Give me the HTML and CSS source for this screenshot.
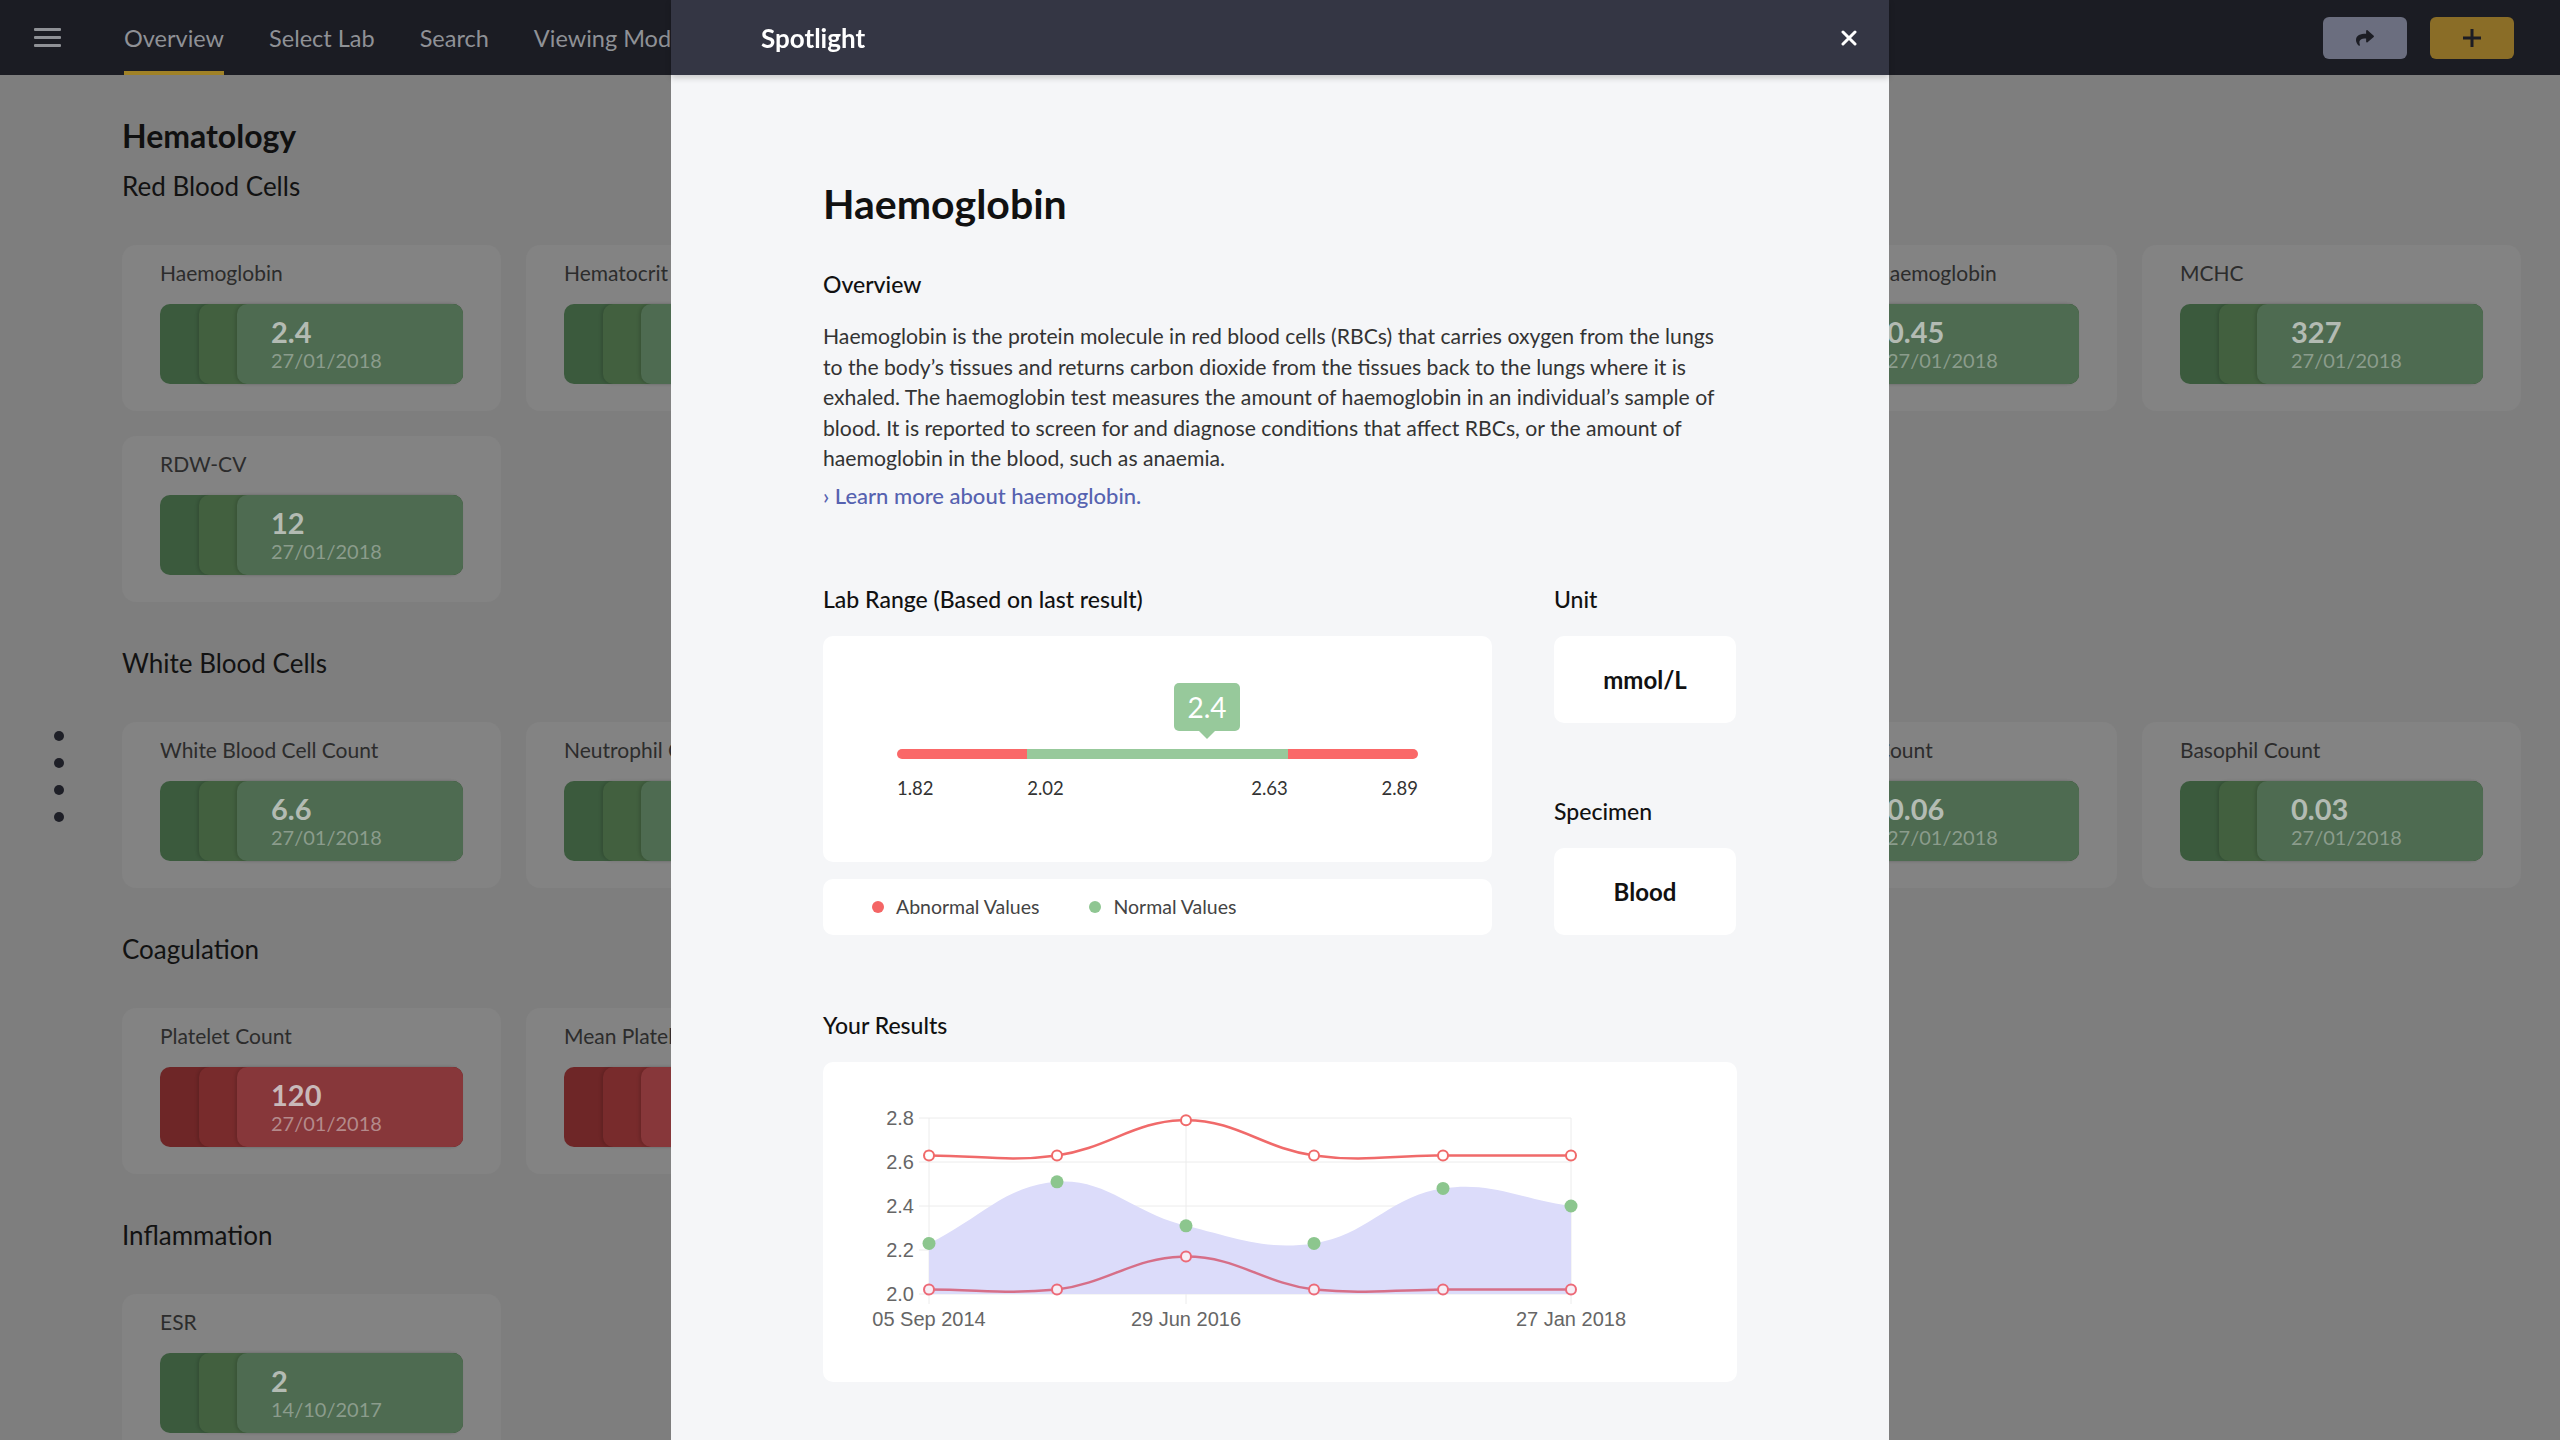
FILE: index.html
```html
<!DOCTYPE html>
<html lang="en">
<head>
<meta charset="utf-8">
<title>Lab Results – Spotlight</title>
<link rel="stylesheet" href="styles.css">
</head>
<body>
<header class="topbar">
  <button class="menu-btn" aria-label="Menu">
    <svg width="27" height="19" viewBox="0 0 27 19"><rect x="0" y="0" width="27" height="3" rx="1"/><rect x="0" y="8" width="27" height="3" rx="1"/><rect x="0" y="16" width="27" height="3" rx="1"/></svg>
  </button>
  <nav class="tabs">
    <a class="tab active" href="#">Overview</a>
    <a class="tab" href="#">Select Lab</a>
    <a class="tab" href="#">Search</a>
    <a class="tab" href="#">Viewing Mode</a>
  </nav>
  <div class="actions">
    <button class="btn btn-share" aria-label="Share">
      <svg width="20" height="18" viewBox="0 0 512 512"><path d="M503.7 189.8L327.7 37.9C312.3 24.5 288 35.3 288 56v80.1C127.4 137.9 0 170.1 0 322.3c0 61.4 39.6 122.3 83.3 154.1 13.7 9.9 33.1-2.5 28.1-18.6C66.1 312.8 132.9 274.3 288 272.1V360c0 20.7 24.3 31.5 39.7 18.2l176-152c11.1-9.6 11.1-26.8 0-36.4z"/></svg>
    </button>
    <button class="btn btn-add" aria-label="Add">
      <svg width="18" height="18" viewBox="0 0 18 18"><path d="M9 1v16M1 9h16" stroke-width="3" stroke-linecap="square"/></svg>
    </button>
  </div>
</header>

<div class="layout">
  <aside class="rail">
    <span class="dot"></span><span class="dot"></span><span class="dot"></span><span class="dot"></span>
  </aside>
  <main class="content">
    <h1 class="page-title">Hematology</h1>

    <section class="group">
      <h2 class="group-title">Red Blood Cells</h2>
      <div class="grid">
        <div class="card"><div class="card-label">Haemoglobin</div><div class="tile"><div class="tile-mid"><div class="tile-main"><div class="val">2.4</div><div class="date">27/01/2018</div></div></div></div></div>
        <div class="card"><div class="card-label">Hematocrit</div><div class="tile"><div class="tile-mid"><div class="tile-main"><div class="val">0.41</div><div class="date">27/01/2018</div></div></div></div></div>
        <div class="card hidden-card"><div class="card-label">Red Blood Cell Count</div><div class="tile"><div class="tile-mid"><div class="tile-main"><div class="val">4.6</div><div class="date">27/01/2018</div></div></div></div></div>
        <div class="card hidden-card"><div class="card-label">Mean Cell Volume</div><div class="tile"><div class="tile-mid"><div class="tile-main"><div class="val">88</div><div class="date">27/01/2018</div></div></div></div></div>
        <div class="card"><div class="card-label">Mean Cell Haemoglobin</div><div class="tile"><div class="tile-mid"><div class="tile-main"><div class="val">0.45</div><div class="date">27/01/2018</div></div></div></div></div>
        <div class="card"><div class="card-label">MCHC</div><div class="tile"><div class="tile-mid"><div class="tile-main"><div class="val">327</div><div class="date">27/01/2018</div></div></div></div></div>
        <div class="card"><div class="card-label">RDW-CV</div><div class="tile"><div class="tile-mid"><div class="tile-main"><div class="val">12</div><div class="date">27/01/2018</div></div></div></div></div>
      </div>
    </section>

    <section class="group">
      <h2 class="group-title">White Blood Cells</h2>
      <div class="grid">
        <div class="card"><div class="card-label">White Blood Cell Count</div><div class="tile"><div class="tile-mid"><div class="tile-main"><div class="val">6.6</div><div class="date">27/01/2018</div></div></div></div></div>
        <div class="card"><div class="card-label">Neutrophil Count</div><div class="tile"><div class="tile-mid"><div class="tile-main"><div class="val">3.9</div><div class="date">27/01/2018</div></div></div></div></div>
        <div class="card hidden-card"><div class="card-label">Lymphocyte Count</div><div class="tile"><div class="tile-mid"><div class="tile-main"><div class="val">2.1</div><div class="date">27/01/2018</div></div></div></div></div>
        <div class="card hidden-card"><div class="card-label">Monocyte Count</div><div class="tile"><div class="tile-mid"><div class="tile-main"><div class="val">0.5</div><div class="date">27/01/2018</div></div></div></div></div>
        <div class="card"><div class="card-label">Eosinophil Count</div><div class="tile"><div class="tile-mid"><div class="tile-main"><div class="val">0.06</div><div class="date">27/01/2018</div></div></div></div></div>
        <div class="card"><div class="card-label">Basophil Count</div><div class="tile"><div class="tile-mid"><div class="tile-main"><div class="val">0.03</div><div class="date">27/01/2018</div></div></div></div></div>
      </div>
    </section>

    <section class="group">
      <h2 class="group-title">Coagulation</h2>
      <div class="grid">
        <div class="card"><div class="card-label">Platelet Count</div><div class="tile bad"><div class="tile-mid"><div class="tile-main"><div class="val">120</div><div class="date">27/01/2018</div></div></div></div></div>
        <div class="card"><div class="card-label">Mean Platelet Volume</div><div class="tile bad"><div class="tile-mid"><div class="tile-main"><div class="val">13.2</div><div class="date">27/01/2018</div></div></div></div></div>
      </div>
    </section>

    <section class="group">
      <h2 class="group-title">Inflammation</h2>
      <div class="grid">
        <div class="card"><div class="card-label">ESR</div><div class="tile"><div class="tile-mid"><div class="tile-main"><div class="val">2</div><div class="date">14/10/2017</div></div></div></div></div>
      </div>
    </section>
  </main>
</div>

<div class="modal" role="dialog" aria-label="Spotlight">
  <div class="modal-head">
    <span class="modal-name">Spotlight</span>
    <button class="close" aria-label="Close">
      <svg width="16" height="16" viewBox="0 0 16 16"><path d="M2 2l12 12M14 2L2 14" stroke-width="3" stroke-linecap="round"/></svg>
    </button>
  </div>
  <div class="modal-body">
    <h1 class="test-title">Haemoglobin</h1>
    <h3 class="sub">Overview</h3>
    <p class="desc">Haemoglobin is the protein molecule in red blood cells (RBCs) that carries oxygen from the lungs to the body’s tissues and returns carbon dioxide from the tissues back to the lungs where it is exhaled. The haemoglobin test measures the amount of haemoglobin in an individual’s sample of blood. It is reported to screen for and diagnose conditions that affect RBCs, or the amount of haemoglobin in the blood, such as anaemia.</p>
    <a class="more" href="#">› Learn more about haemoglobin.</a>

    <div class="facts">
      <div class="range-col">
        <div class="label">Lab Range (Based on last result)</div>
        <div class="range-box">
          <div class="track">
            <div class="seg low"></div>
            <div class="seg mid"></div>
            <div class="seg high"></div>
            <div class="tip" style="left: 59.5%">2.4</div>
          </div>
          <div class="scale">
            <span class="tick">1.82</span>
            <span class="tick">2.02</span>
            <span class="tick tick-end">2.63</span>
            <span class="tick tick-end">2.89</span>
          </div>
        </div>
        <div class="legend">
          <span class="legend-item"><i class="ldot red"></i>Abnormal Values</span>
          <span class="legend-item"><i class="ldot green"></i>Normal Values</span>
        </div>
      </div>
      <div class="side-col">
        <div class="label">Unit</div>
        <div class="info-box">mmol/L</div>
        <div class="label spaced">Specimen</div>
        <div class="info-box">Blood</div>
      </div>
    </div>

    <div class="label results-label">Your Results</div>
    <div class="chart-box">
      <svg class="chart" width="913" height="320" viewBox="0 0 913 320">
        <g class="gridlines">
          <line x1="96" y1="56" x2="748" y2="56"/>
          <line x1="96" y1="100" x2="748" y2="100"/>
          <line x1="96" y1="144" x2="748" y2="144"/>
          <line x1="96" y1="188" x2="748" y2="188"/>
          <line x1="96" y1="232" x2="748" y2="232"/>
          <line x1="106" y1="56" x2="106" y2="242"/>
          <line x1="363" y1="56" x2="363" y2="242"/>
          <line x1="748" y1="56" x2="748" y2="242"/>
        </g>
        <path class="area" d="M106,232 L106,181.4 C157.2,156.8 181.5,123.4 234,119.8 C284.3,116.4 310.2,151.2 363,163.8 C413,175.8 441.7,188.6 491,181.4 C544.5,173.6 566.5,134.2 620,126.4 C669.3,119.2 696.8,137 748,144 L748,232 Z"/>
        <path class="line-hi" d="M106,93.4 C157.2,93.4 182.6,100.4 234,93.4 C285.4,86.4 311.6,58.2 363,58.2 C414.4,58.2 439.6,86.4 491,93.4 C542.4,100.4 568.6,93.4 620,93.4 C671.4,93.4 696.8,93.4 748,93.4"/>
        <path class="line-lo" d="M106,227.6 C157.2,227.6 182.6,232.5 234,227.6 C285.4,221 311.6,194.6 363,194.6 C414.4,194.6 439.6,221 491,227.6 C542.4,232.5 568.6,227.6 620,227.6 C671.4,227.6 696.8,227.6 748,227.6"/>
        <g class="pt-hi">
          <circle cx="106" cy="93.4" r="5"/><circle cx="234" cy="93.4" r="5"/><circle cx="363" cy="58.2" r="5"/><circle cx="491" cy="93.4" r="5"/><circle cx="620" cy="93.4" r="5"/><circle cx="748" cy="93.4" r="5"/>
        </g>
        <g class="pt-lo">
          <circle cx="106" cy="227.6" r="5"/><circle cx="234" cy="227.6" r="5"/><circle cx="363" cy="194.6" r="5"/><circle cx="491" cy="227.6" r="5"/><circle cx="620" cy="227.6" r="5"/><circle cx="748" cy="227.6" r="5"/>
        </g>
        <g class="pt-val">
          <circle cx="106" cy="181.4" r="6.5"/><circle cx="234" cy="119.8" r="6.5"/><circle cx="363" cy="163.8" r="6.5"/><circle cx="491" cy="181.4" r="6.5"/><circle cx="620" cy="126.4" r="6.5"/><circle cx="748" cy="144" r="6.5"/>
        </g>
        <g class="ylab">
          <text x="91" y="63">2.8</text>
          <text x="91" y="107">2.6</text>
          <text x="91" y="151">2.4</text>
          <text x="91" y="195">2.2</text>
          <text x="91" y="239">2.0</text>
        </g>
        <g class="xlab">
          <text x="106" y="264">05 Sep 2014</text>
          <text x="363" y="264">29 Jun 2016</text>
          <text x="748" y="264">27 Jan 2018</text>
        </g>
      </svg>
    </div>
  </div>
</div>
</body>
</html>
```

FILE: styles.css
```css
* { box-sizing: border-box; }

html, body {
  margin: 0;
  height: 100%;
  overflow: hidden;
}

body {
  font-family: Lato, "Noto Sans", sans-serif;
  background: #7e7e7e;
  color: #111;
}

/* ---------- top bar (dimmed behind the dialog) ---------- */
.topbar {
  height: 75px;
  background: #1b1c23;
  display: flex;
  align-items: stretch;
  padding: 0 46px 0 34px;
}

.menu-btn {
  background: none;
  border: 0;
  padding: 0;
  width: 27px;
  display: flex;
  align-items: center;
}
.menu-btn svg { fill: #8f9196; }

.tabs {
  display: flex;
  gap: 45px;
  margin-left: 63px;
}

.tab {
  display: flex;
  align-items: center;
  padding-top: 4px;
  border-bottom: 4px solid transparent;
  font-size: 23.5px;
  color: #8f9196;
  text-decoration: none;
}
.tab.active { border-bottom-color: #a08227; }

.actions {
  margin-left: auto;
  display: flex;
  align-items: center;
  gap: 23px;
}

.btn {
  width: 84px;
  height: 42px;
  border: 0;
  border-radius: 6px;
  display: flex;
  align-items: center;
  justify-content: center;
  padding: 0;
}
.btn-share { background: #6b6e7f; }
.btn-share svg { fill: #1c1d24; }
.btn-add { background: #8a6d27; }
.btn-add svg { stroke: #1c1d24; fill: none; }

/* ---------- page ---------- */
.layout { display: flex; }

.rail {
  width: 122px;
  flex: none;
  display: flex;
  flex-direction: column;
  align-items: center;
  gap: 17px;
  padding: 656px 4px 0 0;
}
.dot {
  width: 10px;
  height: 10px;
  border-radius: 50%;
  background: #1e1f27;
}

.content {
  flex: 1;
  padding: 43px 39px 0 0;
}

.page-title {
  margin: 0 0 17px;
  font-size: 32px;
  line-height: 36px;
  font-weight: 700;
  color: #101010;
}

.group + .group { margin-top: 46px; }

.group-title {
  margin: 0 0 44px;
  font-size: 26px;
  line-height: 30px;
  font-weight: 400;
  color: #121212;
}

.grid {
  display: grid;
  grid-template-columns: repeat(6, 379px);
  gap: 25px;
}

.card {
  background: #838383;
  border-radius: 14px;
  padding: 16px 38px 27px;
}
.hidden-card { visibility: hidden; }

.card-label {
  font-size: 21px;
  line-height: 24px;
  color: #2c2c2c;
  white-space: nowrap;
}

.tile {
  margin-top: 19px;
  height: 80px;
  border-radius: 10px;
  background: #3b5a3d;
  padding-left: 39px;
  display: flex;
}
.tile-mid {
  flex: 1;
  display: flex;
  border-radius: 10px;
  background: #42603f;
  padding-left: 38px;
  box-shadow: -2px 0 3px rgba(0, 0, 0, 0.12);
}
.tile-main {
  flex: 1;
  border-radius: 10px;
  background: #4e6b51;
  padding: 12px 34px 0;
  box-shadow: -2px 0 3px rgba(0, 0, 0, 0.12);
}
.val {
  font-size: 29px;
  line-height: 32px;
  font-weight: 700;
  color: #b3bbb3;
}
.date {
  font-size: 20px;
  line-height: 24px;
  color: #8b9c8c;
}

.tile.bad { background: #6e2627; }
.tile.bad .tile-mid { background: #782b2c; }
.tile.bad .tile-main { background: #87373a; }
.tile.bad .val { color: #c8b9b9; }
.tile.bad .date { color: #b48a8b; }

/* ---------- spotlight dialog ---------- */
.modal {
  position: fixed;
  top: 0;
  left: 50%;
  transform: translateX(-50%);
  width: 1218px;
  height: 100%;
  background: #f5f6f8;
  display: flex;
  flex-direction: column;
  z-index: 10;
}

.modal-head {
  height: 75px;
  flex: none;
  background: #343644;
  display: flex;
  align-items: center;
  justify-content: space-between;
  padding: 0 32px 0 90px;
  box-shadow: 0 3px 6px rgba(0, 0, 0, 0.18);
  position: relative;
}

.modal-name {
  color: #fff;
  font-size: 26px;
  font-weight: 700;
}

.close {
  background: none;
  border: 0;
  padding: 0;
  width: 16px;
  height: 16px;
  display: flex;
}
.close svg { stroke: #fff; fill: none; }

.modal-body {
  padding: 106px 152px 0;
}

.test-title {
  margin: 0;
  font-size: 41px;
  line-height: 46px;
  font-weight: 700;
  color: #111;
}

.sub {
  margin: 42px 0 0;
  font-size: 23px;
  line-height: 30px;
  font-weight: 500;
  color: #111;
}

.desc {
  margin: 22px 0 0;
  max-width: 905px;
  font-size: 21.2px;
  line-height: 30.5px;
  color: #333;
}

.more {
  display: block;
  margin-top: 7px;
  font-size: 22px;
  line-height: 30px;
  font-weight: 500;
  color: #5662b0;
  text-decoration: none;
}

.label {
  font-size: 23px;
  line-height: 30px;
  font-weight: 500;
  color: #111;
  margin-bottom: 22px;
}

.facts {
  margin-top: 73px;
  display: flex;
  gap: 62px;
}

.range-col { width: 669px; }
.side-col { width: 182px; }

.range-box {
  height: 226px;
  background: #fff;
  border-radius: 10px;
  padding: 113px 74px 0;
}

.track {
  position: relative;
  height: 10px;
  display: flex;
}
.seg { height: 10px; }
.seg.low { flex: 1; background: #fa6868; border-radius: 5px 0 0 5px; }
.seg.mid { flex: 2; background: #97c99b; }
.seg.high { flex: 1; background: #fa6868; border-radius: 0 5px 5px 0; }

.tip {
  position: absolute;
  bottom: 28px;
  transform: translateX(-50%);
  width: 66px;
  height: 48px;
  border-radius: 5px;
  background: #97c99b;
  color: #fff;
  font-size: 28px;
  display: flex;
  align-items: center;
  justify-content: center;
}
.tip::after {
  content: "";
  position: absolute;
  top: 100%;
  left: 50%;
  margin-left: -8px;
  border: 8px solid transparent;
  border-bottom: 0;
  border-top-color: #97c99b;
}

.scale {
  margin-top: 16px;
  display: grid;
  grid-template-columns: 1fr 1fr 1fr 1fr;
  font-size: 18.5px;
  line-height: 26px;
  color: #333;
}
.tick-end { text-align: right; }

.legend {
  margin-top: 17px;
  height: 56px;
  background: #fff;
  border-radius: 10px;
  display: flex;
  align-items: center;
  gap: 50px;
  padding-left: 49px;
  font-size: 19.5px;
  color: #444;
}
.legend-item { display: flex; align-items: center; gap: 12px; }
.ldot { width: 12px; height: 12px; border-radius: 50%; }
.ldot.red { background: #f46565; }
.ldot.green { background: #8fc692; }

.info-box {
  height: 87px;
  background: #fff;
  border-radius: 10px;
  display: flex;
  align-items: center;
  justify-content: center;
  font-size: 24px;
  font-weight: 700;
  color: #111;
}
.label.spaced { margin-top: 73px; }

.results-label { margin-top: 75px; }

.chart-box {
  height: 320px;
  background: #fff;
  border-radius: 10px;
}
.chart { display: block; }

.gridlines line { stroke: #ececec; stroke-width: 1; }
.area { fill: #dcdcfa; }
.line-hi { fill: none; stroke: #f06a6a; stroke-width: 2.5; }
.line-lo { fill: none; stroke: #d66f88; stroke-width: 2.5; }
.pt-hi circle { fill: #fff; stroke: #f06a6a; stroke-width: 2; }
.pt-lo circle { fill: #f6eef6; stroke: #ec6a78; stroke-width: 2; }
.pt-val circle { fill: #8cc68e; }

.ylab text, .xlab text {
  font-family: "Liberation Sans", Arial, sans-serif;
  font-size: 20px;
  fill: #666;
}
.ylab text { text-anchor: end; }
.xlab text { text-anchor: middle; }
```
